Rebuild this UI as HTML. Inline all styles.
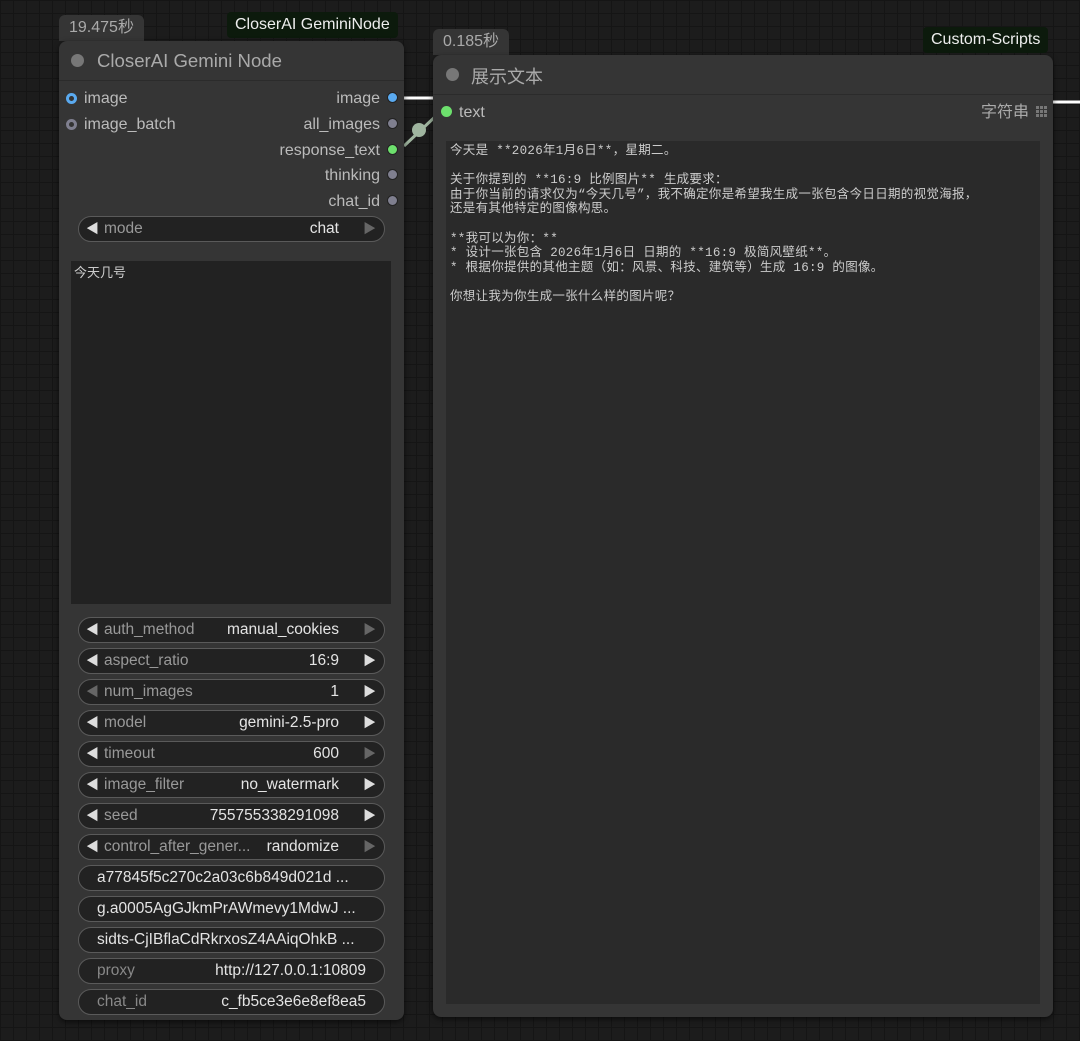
<!DOCTYPE html>
<html><head><meta charset="utf-8"><style>
*{margin:0;padding:0;box-sizing:border-box}
body{width:1080px;height:1041px;overflow:hidden;position:relative;font-family:"Liberation Sans","Noto Sans CJK SC",sans-serif;
background-color:#1c1c1c;
background-image:linear-gradient(#151515 1px,transparent 1px),linear-gradient(90deg,#151515 1px,transparent 1px);
background-size:13px 13px;}
.a{position:absolute}
.node{position:absolute;background:#353535;border-radius:8px;box-shadow:0 2px 6px rgba(0,0,0,.6)}
.title{position:absolute;left:0;right:0;top:0;height:40px;border-bottom:1px solid #2b2b2b}
.tdot{position:absolute;width:13px;height:13px;border-radius:50%;background:#777}
.badge{position:absolute;background:#353535;color:#aaa;font-size:16px;border-radius:6px 6px 0 0;padding:0 10px;height:26px;line-height:26px}
.tag{position:absolute;background:#0c1a0c;color:#eee;font-size:16px;height:26px;line-height:26px;padding:0 8px;border-radius:4px}
.lbl{position:absolute;color:#bbb;font-size:16px;line-height:18px}
.dot{position:absolute;width:11px;height:11px;border-radius:50%;background:#7f7f8f;border:1px solid #222}
.in{position:absolute;width:11px;height:11px;border-radius:50%;background:#7f7f8f}
.in::after{content:"";position:absolute;left:3px;top:3px;width:5px;height:5px;border-radius:50%;background:#333}
.w{position:absolute;left:78px;width:307px;height:26px;border:1.5px solid #5a5a5a;border-radius:13px;background:#222;font-size:15.5px;line-height:24px}
.w .l{position:absolute;left:25px;color:#999}
.w .v{position:absolute;right:45px;color:#e4e4e4}
.w .la{position:absolute;left:7px;top:0;color:#ddd;font-size:13px}
.w .ra{position:absolute;right:8px;top:0;color:#ddd;font-size:13px}
.w .dim{color:#666}
.w .t{position:absolute;left:18px;color:#e4e4e4}
.w .tl{position:absolute;left:18px;color:#888}
.w .tv{position:absolute;right:18px;color:#e4e4e4}
pre{font-family:"Liberation Mono","Noto Sans CJK SC",monospace;font-size:12.5px;letter-spacing:0.3px;line-height:14.6px;color:#ccc;white-space:pre}
</style></head><body>
<svg class="a" style="left:0;top:0" width="1080" height="1041">
<line x1="398" y1="98" x2="440" y2="98" stroke="#fff" stroke-width="3"/>
<line x1="404" y1="146" x2="438" y2="114" stroke="#9fb59f" stroke-width="3"/>
<circle cx="419" cy="130" r="7" fill="#9fb59f"/>
<line x1="1050" y1="102" x2="1080" y2="102" stroke="#fff" stroke-width="3"/>
</svg>

<div class="badge" style="left:59px;top:15px">19.475秒</div>
<div class="tag" style="left:227px;top:12px">CloserAI GeminiNode</div>
<div class="node" style="left:59px;top:41px;width:345px;height:979px">
 <div class="title"><div class="tdot" style="left:12px;top:13px"></div><div class="a" style="left:38px;top:9px;color:#aaa;font-size:18.6px">CloserAI Gemini Node</div></div>
</div>
<div class="in" style="left:66px;top:93px;background:#5aaaf0"></div><div class="lbl" style="left:84px;top:90px">image</div>
<div class="in" style="left:66px;top:119px"></div><div class="lbl" style="left:84px;top:116px">image_batch</div>
<div class="lbl" style="right:700px;top:90px">image</div><div class="dot" style="left:387px;top:92px;background:#5aaaf0"></div>
<div class="lbl" style="right:700px;top:116px">all_images</div><div class="dot" style="left:387px;top:118px"></div>
<div class="lbl" style="right:700px;top:142px">response_text</div><div class="dot" style="left:387px;top:144px;background:#6de06d"></div>
<div class="lbl" style="right:700px;top:167px">thinking</div><div class="dot" style="left:387px;top:169px"></div>
<div class="lbl" style="right:700px;top:193px">chat_id</div><div class="dot" style="left:387px;top:195px"></div>
<div class="w" style="top:216px"><span class="la">◀</span><span class="l">mode</span><span class="v">chat</span><span class="ra dim">▶</span></div>
<div class="a" style="left:71px;top:261px;width:320px;height:343px;background:#222;color:#ccc;font-size:13px;padding:1px 3px">今天几号</div>

<div class="w" style="top:617px"><span class="la">◀</span><span class="l">auth_method</span><span class="v">manual_cookies</span><span class="ra dim">▶</span></div>
<div class="w" style="top:648px"><span class="la">◀</span><span class="l">aspect_ratio</span><span class="v">16:9</span><span class="ra">▶</span></div>
<div class="w" style="top:679px"><span class="la dim">◀</span><span class="l">num_images</span><span class="v">1</span><span class="ra">▶</span></div>
<div class="w" style="top:710px"><span class="la">◀</span><span class="l">model</span><span class="v">gemini-2.5-pro</span><span class="ra">▶</span></div>
<div class="w" style="top:741px"><span class="la">◀</span><span class="l">timeout</span><span class="v">600</span><span class="ra dim">▶</span></div>
<div class="w" style="top:772px"><span class="la">◀</span><span class="l">image_filter</span><span class="v">no_watermark</span><span class="ra">▶</span></div>
<div class="w" style="top:803px"><span class="la">◀</span><span class="l">seed</span><span class="v">755755338291098</span><span class="ra">▶</span></div>
<div class="w" style="top:834px"><span class="la">◀</span><span class="l">control_after_gener...</span><span class="v">randomize</span><span class="ra dim">▶</span></div>
<div class="w" style="top:865px"><span class="t">a77845f5c270c2a03c6b849d021d ...</span></div>
<div class="w" style="top:896px"><span class="t">g.a0005AgGJkmPrAWmevy1MdwJ ...</span></div>
<div class="w" style="top:927px"><span class="t">sidts-CjIBflaCdRkrxosZ4AAiqOhkB ...</span></div>
<div class="w" style="top:958px"><span class="tl">proxy</span><span class="tv">http://127.0.0.1:10809</span></div>
<div class="w" style="top:989px"><span class="tl">chat_id</span><span class="tv">c_fb5ce3e6e8ef8ea5</span></div>

<div class="badge" style="left:433px;top:29px">0.185秒</div>
<div class="tag" style="left:923px;top:27px">Custom-Scripts</div>
<div class="node" style="left:433px;top:55px;width:620px;height:962px">
 <div class="title"><div class="tdot" style="left:13px;top:13px"></div><div class="a" style="left:38px;top:8px;color:#aaa;font-size:18px">展示文本</div></div>
</div>
<div class="dot" style="left:441px;top:106px;background:#6de06d;border:none"></div>
<div class="lbl" style="left:459px;top:104px">text</div>
<div class="lbl" style="left:981px;top:104px;color:#aaa">字符串</div>
<svg class="a" style="left:1036px;top:106px" width="12" height="12"><g fill="#777"><rect x="0" y="0" width="3" height="3"/><rect x="4" y="0" width="3" height="3"/><rect x="8" y="0" width="3" height="3"/><rect x="0" y="4" width="3" height="3"/><rect x="4" y="4" width="3" height="3"/><rect x="8" y="4" width="3" height="3"/><rect x="0" y="8" width="3" height="3"/><rect x="4" y="8" width="3" height="3"/><rect x="8" y="8" width="3" height="3"/></g></svg>
<div class="a" style="left:446px;top:141px;width:594px;height:863px;background:#2a2a2a;padding:3px 4px">
<pre>今天是 **2026年1月6日**，星期二。

关于你提到的 **16:9 比例图片** 生成要求：
由于你当前的请求仅为“今天几号”，我不确定你是希望我生成一张包含今日日期的视觉海报，
还是有其他特定的图像构思。

**我可以为你：**
* 设计一张包含 2026年1月6日 日期的 **16:9 极简风壁纸**。
* 根据你提供的其他主题（如：风景、科技、建筑等）生成 16:9 的图像。

你想让我为你生成一张什么样的图片呢？</pre>
</div>
</body></html>
